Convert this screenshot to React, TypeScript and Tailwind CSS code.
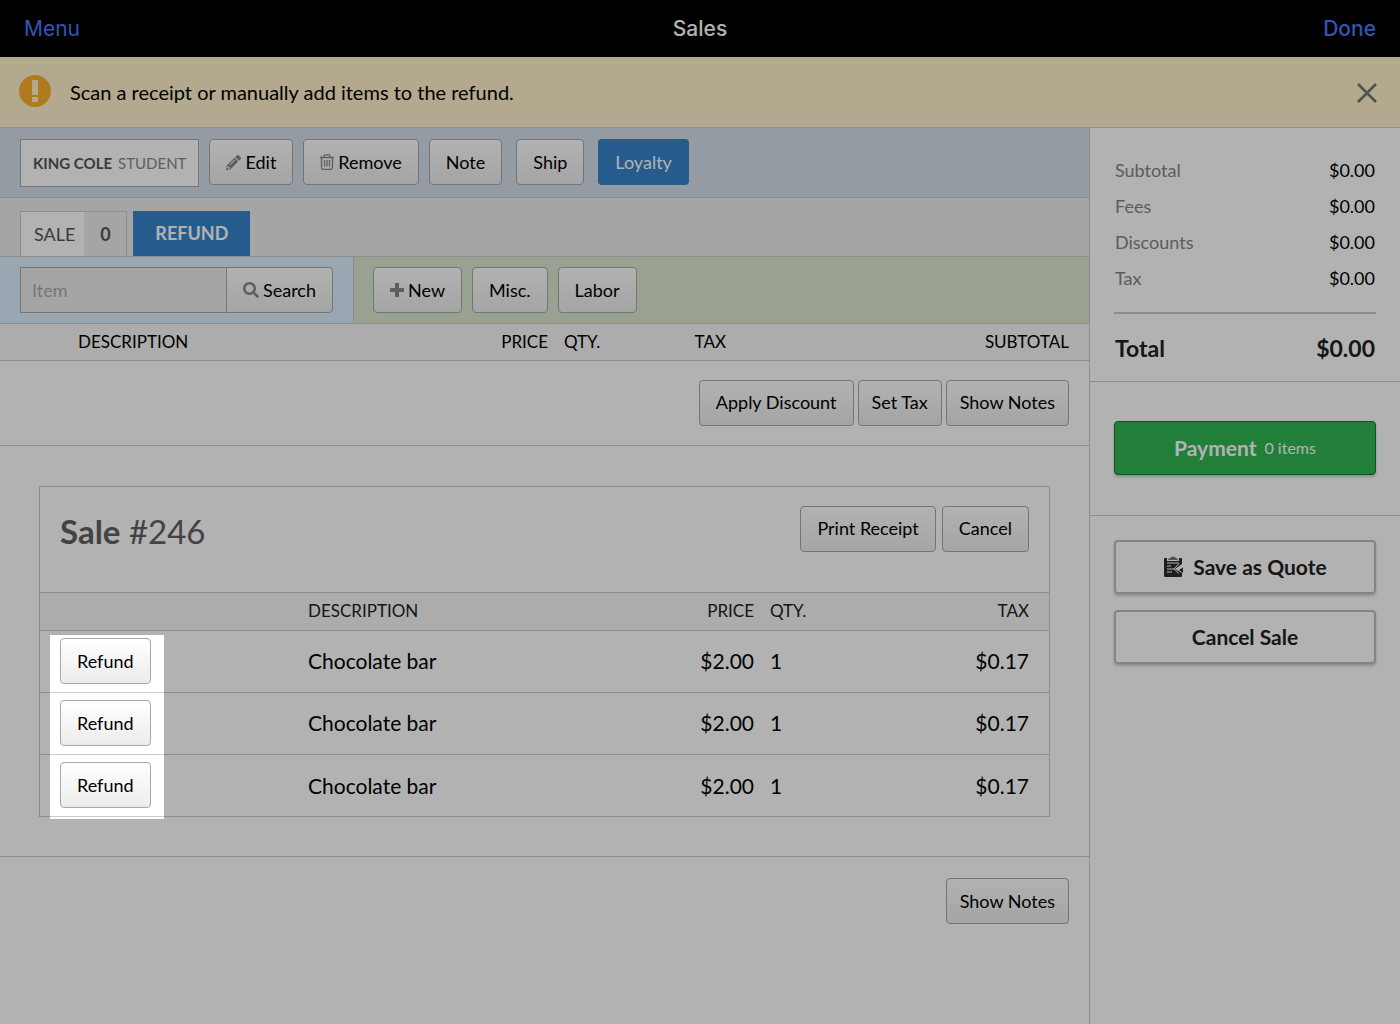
import { type ButtonHTMLAttributes } from "react";
import { FaPencilAlt, FaSearch } from "react-icons/fa";

const items = [
  { id: 1, name: "Chocolate bar", price: "$2.00", qty: 1, tax: "$0.17" },
  { id: 2, name: "Chocolate bar", price: "$2.00", qty: 1, tax: "$0.17" },
  { id: 3, name: "Chocolate bar", price: "$2.00", qty: 1, tax: "$0.17" },
];

const totals = [
  { label: "Subtotal", value: "$0.00" },
  { label: "Fees", value: "$0.00" },
  { label: "Discounts", value: "$0.00" },
  { label: "Tax", value: "$0.00" },
];

function Button({
  className = "px-4",
  ...props
}: ButtonHTMLAttributes<HTMLButtonElement>) {
  return (
    <button
      type="button"
      className={`flex h-[46px] shrink-0 items-center justify-center gap-1 whitespace-nowrap rounded border border-[#a8a8a8] bg-linear-to-b from-white to-[#ececec] text-[18px] text-black ${className}`}
      {...props}
    />
  );
}

function PlusIcon() {
  return (
    <svg width="14" height="14" viewBox="0 0 14 14" aria-hidden="true">
      <path d="M7 0V14M0 7H14" stroke="#888" strokeWidth="4" />
    </svg>
  );
}

function TrashIcon() {
  return (
    <svg
      width="14"
      height="16"
      viewBox="0 0 14 16"
      fill="none"
      stroke="#888"
      strokeWidth="1.3"
      aria-hidden="true"
    >
      <path d="M0 3.5H14M4 3.5V2.2Q4 0.8 5.4 0.8H8.6Q10 0.8 10 2.2V3.5" />
      <path d="M1.5 3.5V13.6Q1.5 15.3 3.1 15.3H10.9Q12.5 15.3 12.5 13.6V3.5" />
      <path d="M4.5 6V12.5M7 6V12.5M9.5 6V12.5" />
    </svg>
  );
}

function QuoteIcon() {
  return (
    <svg width="20" height="22" viewBox="0 0 20 22" aria-hidden="true">
      <path
        d="M2 2H4V5H16V2H18Q19 2 19 3V8L12 13L19 17V20Q19 21 18 21H2Q1 21 1 20V3Q1 2 2 2Z"
        fill="#2b2b2b"
      />
      <path d="M16 14L20 11.5V17Z" fill="#2b2b2b" />
      <path
        d="M4 7H16M4 10H8M4 13H11M4 16H9"
        stroke="#fff"
        strokeWidth="1.2"
      />
      <path d="M16 7.5L11 13L16 17.5" stroke="#fff" fill="none" />
      <path d="M5 4Q5 2.5 7 2Q8 0.5 10 0.5T13 2Q15 2.5 15 4Z" fill="#777" />
    </svg>
  );
}

export default function App() {
  return (
    <div className="flex min-h-screen flex-col overflow-hidden bg-white font-['Lato',sans-serif] text-black">
      <header className="grid h-[57px] grid-cols-3 items-center bg-black px-6 font-['Inter',sans-serif] text-[21px]">
        <button type="button" className="justify-self-start text-[#4a7aff]">
          Menu
        </button>
        <h1 className="justify-self-center font-medium text-white">Sales</h1>
        <button
          type="button"
          className="justify-self-end font-medium text-[#4a7aff]"
        >
          Done
        </button>
      </header>

      <div
        role="status"
        className="flex h-[71px] items-center border-b border-[#cbcbcb] bg-[#fff2cd] pr-[22px] pl-[18px]"
      >
        <svg width="34" height="34" viewBox="0 0 34 34" aria-hidden="true">
          <circle cx="17" cy="16" r="16" fill="#fdb12c" />
          <path d="M14 5H20V20H14ZM14 22H20V27H14Z" fill="#fff2cd" />
        </svg>
        <p className="ml-[18px] text-[20px]">
          Scan a receipt or manually add items to the refund.
        </p>
        <button type="button" aria-label="Dismiss" className="ml-auto">
          <svg width="22" height="24" viewBox="0 0 22 24" aria-hidden="true">
            <path d="M2 4L20 22M20 4L2 22" stroke="#757575" strokeWidth="2.6" />
          </svg>
        </button>
      </div>

      <div className="flex flex-1">
        <main className="min-w-0 flex-1">
          {/* customer */}
          <div className="flex h-[70px] items-start border-b border-[#cbcbcb] bg-[#d5dfe9] px-5 pt-[11px]">
            <div className="mr-[10px] flex h-12 items-center gap-[6px] border border-[#a8a8a8] bg-white px-3 text-[15px]">
              <span className="font-bold text-[#555]">KING COLE</span>
              <span className="text-[#888]">STUDENT</span>
            </div>
            <div className="flex gap-[10px]">
              <Button>
                <FaPencilAlt size={15} className="text-[#888]" />
                Edit
              </Button>
              <Button>
                <TrashIcon />
                Remove
              </Button>
              <Button>Note</Button>
            </div>
            <Button className="mx-[14px] px-4">Ship</Button>
            <button
              type="button"
              className="h-[46px] rounded bg-[#3583cb] px-[17px] text-[18px] text-white"
            >
              Loyalty
            </button>
          </div>

          {/* tabs */}
          <div className="flex h-[59px] items-end gap-[6px] border-b border-[#cbcbcb] bg-[#ededed] px-5 text-[18px]">
            <button
              type="button"
              className="flex h-[45px] border border-b-0 border-[#cbcbcb] bg-white text-[#555]"
            >
              <span className="flex h-full items-center pr-[9px] pl-[13px]">
                SALE
              </span>
              <span className="flex h-full w-[42px] items-center justify-center bg-[#ededed] font-bold">
                0
              </span>
            </button>
            <button
              type="button"
              className="h-[45px] bg-[#3583cb] px-[22px] font-bold text-white"
            >
              REFUND
            </button>
          </div>

          {/* item search */}
          <div className="flex h-[67px] border-b border-[#cbcbcb]">
            <div className="flex w-[354px] shrink-0 items-center border-r border-[#cbcbcb] bg-[#ddeeff] px-5">
              <input
                type="text"
                aria-label="Item"
                placeholder="Item"
                className="h-[46px] min-w-0 flex-1 border border-r-0 border-[#a8a8a8] bg-[#ededed] px-[11px] text-[18px] placeholder:text-[#aaa]"
              />
              <Button className="rounded-l-none px-4">
                <FaSearch size={16} className="text-[#888]" />
                Search
              </Button>
            </div>
            <div className="flex flex-1 items-center gap-[10px] bg-[#dce9ce] px-[19px]">
              <Button>
                <PlusIcon />
                New
              </Button>
              <Button>Misc.</Button>
              <Button>Labor</Button>
            </div>
          </div>

          <table className="w-full table-fixed">
            <thead>
              <tr className="h-9 border-b border-[#cbcbcb] bg-[#f6f6f6] text-[17px]">
                <th className="pl-[78px] text-left font-normal">DESCRIPTION</th>
                <th className="w-[100px] pr-2 text-right font-normal">PRICE</th>
                <th className="w-[80px] pl-2 text-left font-normal">QTY.</th>
                <th className="w-[98px] pr-2 text-right font-normal">TAX</th>
                <th className="w-[355px] pr-5 text-right font-normal">
                  SUBTOTAL
                </th>
              </tr>
            </thead>
          </table>

          <div className="flex h-[85px] items-center justify-end gap-1 border-b border-[#cbcbcb] px-5">
            <Button>Apply Discount</Button>
            <Button className="px-[13px]">Set Tax</Button>
            <Button className="px-[13px]">Show Notes</Button>
          </div>

          {/* refunded sale */}
          <div className="border-b border-[#cbcbcb] px-[39px] pt-10 pb-[39px]">
            <section className="relative border border-[#cbcbcb]">
              <div className="flex h-[105px] items-start gap-[6px] px-5 pt-[19px]">
                <h2 className="mr-auto text-[33px] leading-[50px] text-[#616161]">
                  <b>Sale</b> #246
                </h2>
                <Button>Print Receipt</Button>
                <Button>Cancel</Button>
              </div>
              <table className="w-full table-fixed">
                <thead>
                  <tr className="h-[38px] border-y border-[#cbcbcb] bg-[#f6f6f6] text-[17px] text-[#222]">
                    <th className="w-[260px]" aria-label="Action" />
                    <th className="pl-2 text-left font-normal">DESCRIPTION</th>
                    <th className="w-[110px] pr-2 text-right font-normal">
                      PRICE
                    </th>
                    <th className="w-[100px] pl-2 text-left font-normal">
                      QTY.
                    </th>
                    <th className="w-[187px] pr-5 text-right font-normal">
                      TAX
                    </th>
                  </tr>
                </thead>
                <tbody>
                  {items.map((item) => (
                    <tr
                      key={item.id}
                      className="h-[62px] border-b border-[#cbcbcb] text-[21px] last:border-b-0"
                    >
                      <td className="pl-5">
                        <Button>Refund</Button>
                      </td>
                      <td className="pl-2">{item.name}</td>
                      <td className="pr-2 text-right">{item.price}</td>
                      <td className="pl-2">{item.qty}</td>
                      <td className="pr-5 text-right">{item.tax}</td>
                    </tr>
                  ))}
                </tbody>
              </table>
              {/* spotlight on the refund buttons, the shadow dims the rest */}
              <div className="pointer-events-none absolute -bottom-[3px] left-[10px] z-10 h-[184px] w-[114px] shadow-[0_0_0_3000px_rgba(0,0,0,0.3)]" />
            </section>
          </div>

          <div className="flex justify-end px-5 pt-[21px]">
            <Button className="px-[13px]">Show Notes</Button>
          </div>
        </main>

        <aside className="w-[311px] shrink-0 border-l border-[#cbcbcb]">
          <div className="border-b border-[#cbcbcb] px-6 pt-6 pb-4">
            <dl className="border-b-2 border-[#cbcbcb] pb-4">
              {totals.map((row) => (
                <div
                  key={row.label}
                  className="flex h-9 items-center justify-between px-px text-[18px]"
                >
                  <dt className="text-[#858585]">{row.label}</dt>
                  <dd>{row.value}</dd>
                </div>
              ))}
            </dl>
            <div className="flex h-[51px] items-end justify-between px-px text-[23px] font-bold text-[#222]">
              <span>Total</span>
              <span>{totals[0].value}</span>
            </div>
          </div>
          <div className="border-b border-[#cbcbcb] px-6 pt-[39px] pb-10">
            <button
              type="button"
              className="flex h-[54px] w-full items-center justify-center gap-2 rounded-sm border border-[#0b7a25] bg-[#31b653] text-white shadow-[0_2px_3px_rgba(0,0,0,0.2)]"
            >
              <span className="text-[21px] font-bold">Payment</span>
              <span className="text-[16px]">0 items</span>
            </button>
          </div>
          <div className="flex flex-col gap-4 px-6 py-6">
            <button
              type="button"
              className="flex h-[54px] items-center justify-center gap-[10px] rounded-sm border-2 border-[#bebebe] text-[21px] font-bold text-[#222] shadow-[0_2px_3px_rgba(0,0,0,0.2)]"
            >
              <QuoteIcon />
              Save as Quote
            </button>
            <button
              type="button"
              className="h-[54px] rounded-sm border-2 border-[#bebebe] text-[21px] font-bold text-[#222] shadow-[0_2px_3px_rgba(0,0,0,0.2)]"
            >
              Cancel Sale
            </button>
          </div>
        </aside>
      </div>
    </div>
  );
}
